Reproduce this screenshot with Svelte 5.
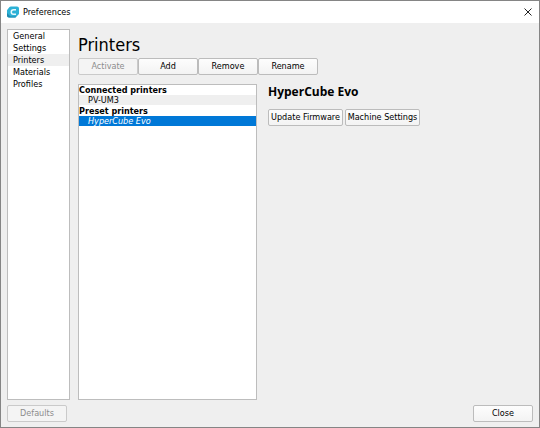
<script lang="ts">
	const pages = ['General', 'Settings', 'Printers', 'Materials', 'Profiles'];
	const groups = [
		{ title: 'Connected printers', printers: ['PV-UM3'] },
		{ title: 'Preset printers', printers: ['HyperCube Evo'] }
	];

	let page = $state('Printers');
	let printer = $state('HyperCube Evo');
	let active = $state('HyperCube Evo');
</script>

<div class="window">
	<header class="titlebar">
		<svg class="logo" viewBox="0 0 24 24" aria-hidden="true">
			<path d="M8 1h12a4 4 0 0 1 4 4v9a4 4 0 0 1-1 3l-5 5a4 4 0 0 1-3 1H4a4 4 0 0 1-4-4v-9a4 4 0 0 1 1-3l4-5a4 4 0 0 1 3-1z" fill="#2cb1d6" />
			<path d="M0 14v5a4 4 0 0 0 4 4h11a4 4 0 0 0 3-1l1-1H7z" fill="#2088ad" />
			<path d="M18 7.500h-5a4.500 4.500 0 0 0 0 9h5" fill="none" stroke="#e8f8fc" stroke-width="3" />
		</svg>
		<span class="caption">Preferences</span>
		<button class="close-x" aria-label="Close window">
			<svg viewBox="0 0 8 8" aria-hidden="true">
				<path d="M0.5 0.5l7 7M7.5 0.5l-7 7" stroke="#222" stroke-width="1" />
			</svg>
		</button>
	</header>

	<div class="content">
		<nav class="pages">
			{#each pages as name}
				<button class="page" class:current={page == name} onclick={() => (page = name)}>{name}</button>
			{/each}
		</nav>

		<main class="main">
			<h1>{page}</h1>
			<div class="toolbar">
				<button class="btn" disabled={printer == active} onclick={() => (active = printer)}>Activate</button>
				<button class="btn">Add</button>
				<button class="btn">Remove</button>
				<button class="btn">Rename</button>
			</div>
			<div class="panes">
				<div class="tree">
					{#each groups as group}
						<div class="group">{group.title}</div>
						{#each group.printers as name}
							<button
								class="printer"
								class:active={active == name}
								class:selected={printer == name}
								onclick={() => (printer = name)}>{name}</button
							>
						{/each}
					{/each}
				</div>
				<section class="details">
					<h2>{printer}</h2>
					<div class="actions">
						<button class="btn action">Update Firmware</button>
						<button class="btn action">Machine Settings</button>
					</div>
				</section>
			</div>
		</main>
	</div>

	<footer class="footer">
		<button class="btn" disabled>Defaults</button>
		<button class="btn">Close</button>
	</footer>
</div>

<style>
	:global(body) {
		margin: 0;
	}
	.window {
		display: flex;
		flex-direction: column;
		box-sizing: border-box;
		min-height: 100vh;
		border: 1px solid #858585;
		background: #efefef;
		color: #000;
		font-family: 'DejaVu Sans Condensed', 'DejaVu Sans', sans-serif;
		font-size: 9px;
	}
	button {
		font: inherit;
		color: inherit;
	}
	.titlebar {
		display: flex;
		align-items: center;
		height: 22px;
		padding: 0 6px;
		background: #fff;
	}
	.logo {
		width: 12px;
		height: 12px;
	}
	.caption {
		margin-left: 4px;
	}
	.close-x {
		display: flex;
		margin-left: auto;
		padding: 0 1px;
		border: none;
		background: none;
	}
	.close-x svg {
		width: 8px;
		height: 8px;
	}
	.content {
		display: flex;
		flex: 1;
		gap: 8px;
		padding: 6px 6px 0;
	}
	.pages {
		display: flex;
		flex-direction: column;
		box-sizing: border-box;
		width: 63px;
		border: 1px solid #bdbdbd;
		background: #fff;
	}
	.page {
		height: 12px;
		padding: 0 5px;
		border: none;
		background: none;
		line-height: 12px;
		text-align: left;
	}
	.page.current {
		background: #efefef;
	}
	.main {
		display: flex;
		flex: 1;
		flex-direction: column;
	}
	h1 {
		margin: 0;
		padding: 4px 0 1px;
		font-size: 18px;
		font-weight: 400;
		line-height: 24px;
	}
	.toolbar {
		display: flex;
	}
	.btn {
		box-sizing: border-box;
		width: 60px;
		height: 17px;
		padding: 0;
		border: 1px solid #bcbcbc;
		border-radius: 2px;
		background: linear-gradient(#fdfdfd, #f3f3f3);
		line-height: 15px;
		white-space: nowrap;
	}
	.btn:disabled {
		border-color: #cacaca;
		background: #f4f4f4;
		color: #8c8c8c;
	}
	.panes {
		display: flex;
		flex: 1;
		gap: 11px;
		padding-top: 9px;
	}
	.tree {
		display: flex;
		flex-direction: column;
		box-sizing: border-box;
		width: 34%;
		min-width: 179px;
		border: 1px solid #bdbdbd;
		background: #fff;
	}
	.group {
		font-weight: 700;
		line-height: 10px;
	}
	.printer + .group {
		padding-top: 1px;
	}
	.printer {
		height: 10px;
		padding: 0 9px;
		border: none;
		background: #efefef;
		line-height: 10px;
		text-align: left;
	}
	.printer.active {
		font-style: italic;
	}
	.printer.selected {
		background: #0078d7;
		color: #fff;
	}
	h2 {
		margin: 0;
		font-family: 'Open Sans', sans-serif;
		font-size: 12px;
		line-height: 16px;
	}
	.actions {
		display: flex;
		gap: 2px;
		padding-top: 9px;
	}
	.action {
		width: 75px;
	}
	.footer {
		display: flex;
		justify-content: space-between;
		padding: 5px 6px;
	}
</style>
